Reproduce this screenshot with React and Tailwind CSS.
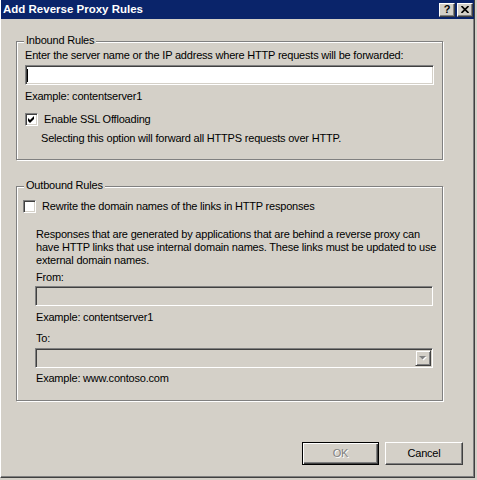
import React from 'react'

// Classic Windows dialog: "Add Reverse Proxy Rules"

const GroupBox = ({ title, className, children }) => (
  <div
    className={`relative w-[427px] border border-[#808080] shadow-[inset_1px_1px_0_#fff,1px_1px_0_#fff] ${className || ''}`}
  >
    <div className="absolute -top-[8px] left-[7px] px-[2px] bg-[#d4d0c8] leading-[13px]">{title}</div>
    {children}
  </div>
)

const CheckBox = ({ checked }) => (
  <div className="w-[13px] h-[13px] shrink-0 bg-white border border-t-[#808080] border-l-[#808080] border-r-white border-b-white shadow-[inset_1px_1px_0_#404040,inset_-1px_-1px_0_#d4d0c8] flex items-center justify-center">
    {checked && (
      <svg width="7" height="7" viewBox="0 0 7 7" className="block">
        <path d="M0 2 L2 4 L6 0 L6 3 L2 7 L0 5 Z" fill="#000" />
      </svg>
    )}
  </div>
)

const Field = ({ width, disabled, children }) => (
  <div
    className={`${width} h-[20px] flex items-center border border-t-[#808080] border-l-[#808080] border-r-white border-b-white shadow-[inset_1px_1px_0_#404040,inset_-1px_-1px_0_#d4d0c8] ${disabled ? 'bg-[#d4d0c8]' : 'bg-white'}`}
  >
    {children}
  </div>
)

const CaptionButton = ({ children }) => (
  <div className="w-[16px] h-[14px] bg-[#d4d0c8] border border-t-white border-l-white border-r-[#404040] border-b-[#404040] shadow-[inset_-1px_-1px_0_#808080] flex items-center justify-center">
    {children}
  </div>
)

export default function App() {
  return (
    <div className="w-[477px] h-[480px] bg-[#d4d0c8] text-black text-[11px] leading-[13px] tracking-[-0.2px] font-['Liberation_Sans',Arial,sans-serif]">
      <div className="w-[475px] h-[478px] flex flex-col border-l border-r border-b border-l-white border-r-[#404040] border-b-[#404040] shadow-[inset_-1px_-1px_0_#808080]">
        {/* title bar */}
        <div className="h-[19px] bg-[#0a246a] flex items-center justify-between pl-[2px] pr-[1px]">
          <span className="text-white font-bold text-[11.5px] tracking-normal">Add Reverse Proxy Rules</span>
          <div className="flex gap-[2px]">
            <CaptionButton>
              <span className="font-bold text-[11px] leading-[11px] text-black">?</span>
            </CaptionButton>
            <CaptionButton>
              <svg width="8" height="7" viewBox="0 0 8 7" className="block">
                <path d="M0.5 0 L7.5 7 M7.5 0 L0.5 7" stroke="#000" strokeWidth="1.6" />
              </svg>
            </CaptionButton>
          </div>
        </div>

        {/* client area */}
        <div className="flex flex-col pl-[15px]">
          <GroupBox title="Inbound Rules" className="mt-[22px]">
            <div className="flex flex-col pl-[8px] pt-[7px] pb-[14px]">
              <div className="whitespace-nowrap">Enter the server name or the IP address where HTTP requests will be forwarded:</div>
              <div className="mt-[3px]">
                <Field width="w-[409px]">
                  <span className="ml-[1px] w-px h-[13px] bg-black" />
                </Field>
              </div>
              <div className="mt-[5px]">Example: contentserver1</div>
              <div className="mt-[10px] flex items-center">
                <CheckBox checked />
                <span className="ml-[6px]">Enable SSL Offloading</span>
              </div>
              <div className="mt-[6px] pl-[16px]">Selecting this option will forward all HTTPS requests over HTTP.</div>
            </div>
          </GroupBox>

          <GroupBox title="Outbound Rules" className="mt-[26px]">
            <div className="flex flex-col pl-[6px] pt-[13px] pb-[15px]">
              <div className="flex items-center">
                <CheckBox />
                <span className="ml-[6px]">Rewrite the domain names of the links in HTTP responses</span>
              </div>
              <div className="flex flex-col pl-[12px]">
                <div className="mt-[15px] pl-[1px] whitespace-nowrap">
                  Responses that are generated by applications that are behind a reverse proxy can
                  <br />
                  have HTTP links that use internal domain names. These links must be updated to use
                  <br />
                  external domain names.
                </div>
                <div className="mt-[4px] pl-[1px]">From:</div>
                <div className="mt-[2px]">
                  <Field width="w-[398px]" disabled />
                </div>
                <div className="mt-[5px] pl-[1px]">Example: contentserver1</div>
                <div className="mt-[8px] pl-[1px]">To:</div>
                <div className="mt-[3px]">
                  <Field width="w-[398px]" disabled>
                    <div className="ml-auto mr-[1px] w-[16px] h-[16px] bg-[#d4d0c8] border border-t-[#d4d0c8] border-l-[#d4d0c8] border-r-[#404040] border-b-[#404040] shadow-[inset_1px_1px_0_#fff,inset_-1px_-1px_0_#808080] flex items-center justify-center">
                      <svg width="8" height="5" viewBox="0 0 8 5" className="block">
                        <path d="M1 1 L8 1 L4.5 4.5 Z" fill="#fff" />
                        <path d="M0 0 L7 0 L3.5 3.5 Z" fill="#808080" />
                      </svg>
                    </div>
                  </Field>
                </div>
                <div className="mt-[4px] pl-[1px]">Example: www.contoso.com</div>
              </div>
            </div>
          </GroupBox>

          <div className="mt-[41px] flex justify-end gap-[6px] pr-[11px]">
            <div className="w-[77px] h-[23px] border border-black bg-[#d4d0c8] shadow-[inset_1px_1px_0_#fff,inset_-1px_-1px_0_#404040,inset_-2px_-2px_0_#808080] flex items-center justify-center">
              <span className="text-[#808080] [text-shadow:1px_1px_0_#fff]">OK</span>
            </div>
            <div className="w-[78px] h-[23px] border border-t-white border-l-white border-r-[#404040] border-b-[#404040] bg-[#d4d0c8] shadow-[inset_-1px_-1px_0_#808080] flex items-center justify-center">
              <span>Cancel</span>
            </div>
          </div>
        </div>
      </div>
    </div>
  )
}
